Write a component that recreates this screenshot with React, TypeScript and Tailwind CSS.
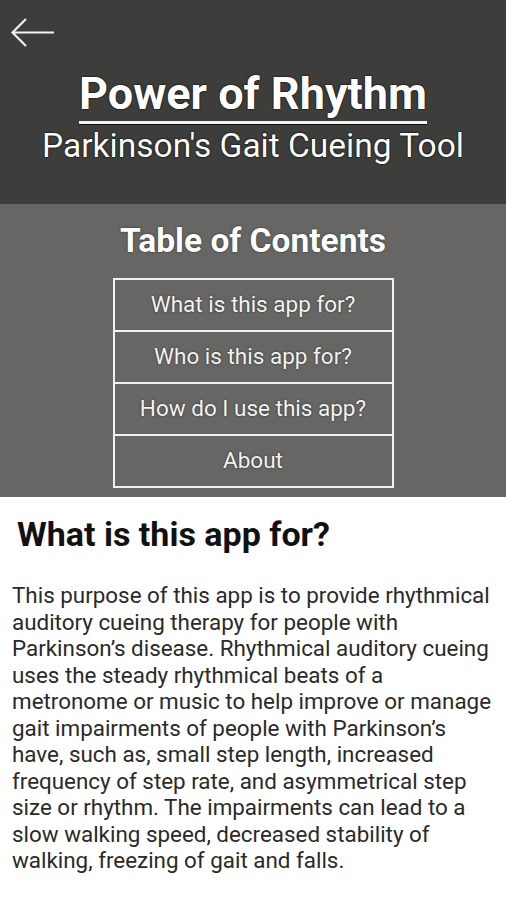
import React from 'react';

const items = ['What is this app for?', 'Who is this app for?', 'How do I use this app?', 'About'];

const lines = [
  'This purpose of this app is to provide rhythmical',
  'auditory cueing therapy for people with',
  'Parkinson’s disease. Rhythmical auditory cueing',
  'uses the steady rhythmical beats of a',
  'metronome or music to help improve or manage',
  'gait impairments of people with Parkinson’s',
  'have, such as, small step length, increased',
  'frequency of step rate, and asymmetrical step',
  'size or rhythm. The impairments can lead to a',
  'slow walking speed, decreased stability of',
  'walking, freezing of gait and falls.',
];

const App = () => {
  return (
    <div className="min-h-[900px] w-full bg-white font-['Roboto',sans-serif]">
      {/* Header */}
      <div className="h-[204px] bg-[#3d3e3c] px-[10px] pt-[17px]">
        <svg className="block" width="46" height="32" viewBox="0 0 46 32" fill="none" stroke="#f2f2f2" strokeWidth="2.2">
          <path d="M44 15.5H3" />
          <path d="M16 2L2.5 15.5L16 29" />
        </svg>
        <div className="mt-[22px] flex flex-col items-center text-white [text-shadow:0_0_2px_#000,0_0_1px_#000]">
          <h1 className="border-b-[3px] border-[#f4f4f4] pb-[4px] text-[45px] leading-[46px] font-bold shadow-[0_1px_0_#111]">
            Power of Rhythm
          </h1>
          <p className="mt-[4px] text-[33.5px] leading-[36px]">Parkinson's Gait Cueing Tool</p>
        </div>
      </div>

      {/* Table of contents */}
      <div className="flex h-[293px] flex-col items-center bg-[#666765] pt-[17px]">
        <h2 className="text-[33.5px] leading-[40px] font-bold text-white [text-shadow:0_0_2px_#222]">Table of Contents</h2>
        <div className="mt-[17px] flex w-[281px] flex-col border-2 border-[#f0f0f0]">
          {items.map((t, i) => (
            <div
              key={t}
              className={`flex h-[50px] items-center justify-center text-[22.5px] text-[#f4f4f4] [text-shadow:0_0_2px_#222] ${i > 0 ? 'h-[52px] border-t-2 border-[#f0f0f0]' : ''}`}
            >
              {t}
            </div>
          ))}
        </div>
      </div>

      {/* Content */}
      <div className="pt-[17px] pl-[12px]">
        <h3 className="pl-[5px] text-[34px] leading-[40px] font-bold text-[#111]">What is this app for?</h3>
        <p className="mt-[28px] text-[22.4px] leading-[26.5px] whitespace-nowrap text-[#2a2a2a]">
          {lines.map((l) => (
            <span key={l} className="block">
              {l}
            </span>
          ))}
        </p>
      </div>
    </div>
  );
};

export default App;
